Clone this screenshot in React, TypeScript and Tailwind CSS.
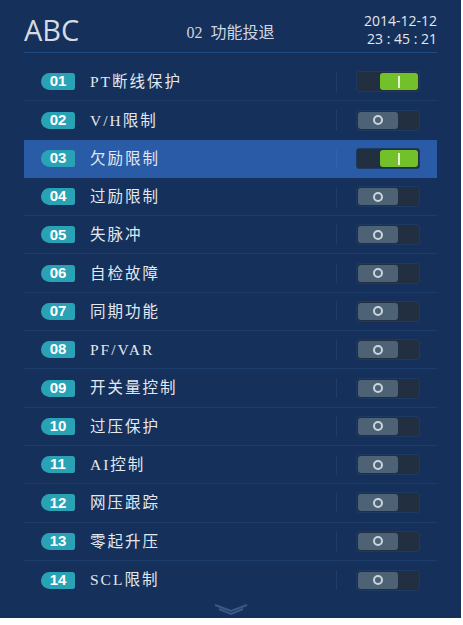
import React from "react";

const items = [
  { no: "01", name: "PT断线保护", on: true },
  { no: "02", name: "V/H限制", on: false },
  { no: "03", name: "欠励限制", on: true, active: true },
  { no: "04", name: "过励限制", on: false },
  { no: "05", name: "失脉冲", on: false },
  { no: "06", name: "自检故障", on: false },
  { no: "07", name: "同期功能", on: false },
  { no: "08", name: "PF/VAR", on: false },
  { no: "09", name: "开关量控制", on: false },
  { no: "10", name: "过压保护", on: false },
  { no: "11", name: "AI控制", on: false },
  { no: "12", name: "网压跟踪", on: false },
  { no: "13", name: "零起升压", on: false },
  { no: "14", name: "SCL限制", on: false },
];

function Toggle({ on }: { on: boolean }) {
  return (
    <div className="flex h-[21px] w-[64px] rounded-[3px] border border-[#1d3a62] bg-[#222f40] p-[1px]">
      {on ? (
        <>
          <div className="w-[22px]" />
          <div className="flex flex-1 items-center justify-center rounded-[3px] bg-[#72c02a]">
            <div className="h-[12px] w-[2px] bg-[#e8f5d8]" />
          </div>
        </>
      ) : (
        <>
          <div className="flex w-[40px] items-center justify-center rounded-[3px] bg-[#4d6275]">
            <div className="h-[10px] w-[10px] rounded-full border-2 border-[#c9d4df]" />
          </div>
          <div className="flex-1" />
        </>
      )}
    </div>
  );
}

export default function App() {
  return (
    <div className="h-[625px] w-[463px] bg-white">
      <div className="flex h-[618px] w-[461px] flex-col bg-[#15305a] px-[24px]">
        <div className="flex h-[53px] items-center justify-between border-b border-[#1f4a82] pt-[7px]">
          <div
            className="w-[120px] text-[29px] leading-none text-[#d6dbe3]"
            style={{ fontFamily: '"Open Sans", sans-serif' }}
          >
            ABC
          </div>
          <div
            className="pt-[6px] text-[16px] text-[#cfd6e0]"
            style={{ fontFamily: '"Liberation Serif", "Noto Sans CJK SC", serif' }}
          >
            02&nbsp; 功能投退
          </div>
          <div
            className="w-[120px] text-right text-[14px] leading-[18px] text-[#e2e7ee]"
            style={{ fontFamily: '"Open Sans", sans-serif' }}
          >
            <div>2014-12-12</div>
            <div>23 : 45 : 21</div>
          </div>
        </div>
        <div className="mt-[10px] flex flex-col">
          {items.map((it, i) => (
            <div
              key={it.no}
              className={`flex h-[38.3px] items-center ${
                i < items.length - 1 && !it.active && !items[i + 1].active ? "border-b border-[#1c3d6b]" : ""
              } ${it.active ? "bg-[#2a5ba6]" : ""}`}
            >
              <div
                className="ml-[17px] flex h-[17px] w-[34px] items-center justify-center rounded-l-[9px] rounded-r-[3px] bg-[#2aa2b6] text-[15px] font-bold text-white"
                style={{ fontFamily: '"Liberation Sans", sans-serif' }}
              >
                {it.no}
              </div>
              <div
                className="ml-[15px] flex-1 text-[15.5px] tracking-[2px] text-[#e3e8ef]"
                style={{ fontFamily: '"Liberation Serif", "Noto Sans CJK SC", serif' }}
              >
                {it.name}
              </div>
              <div className={`h-[20px] w-px ${it.active ? "bg-[#2d62ad]" : "bg-[#1e3e69]"}`} />
              <div className="ml-[19px] mr-[17px]">
                <Toggle on={it.on} />
              </div>
            </div>
          ))}
        </div>
        <div className="mt-[4px] flex justify-center">
          <svg width="36" height="14" viewBox="0 0 36 14" fill="none" stroke="#3a5a85" strokeWidth="2">
            <path d="M2 2 L18 8 L34 2" />
            <path d="M6 6 L18 11 L30 6" />
          </svg>
        </div>
      </div>
    </div>
  );
}
